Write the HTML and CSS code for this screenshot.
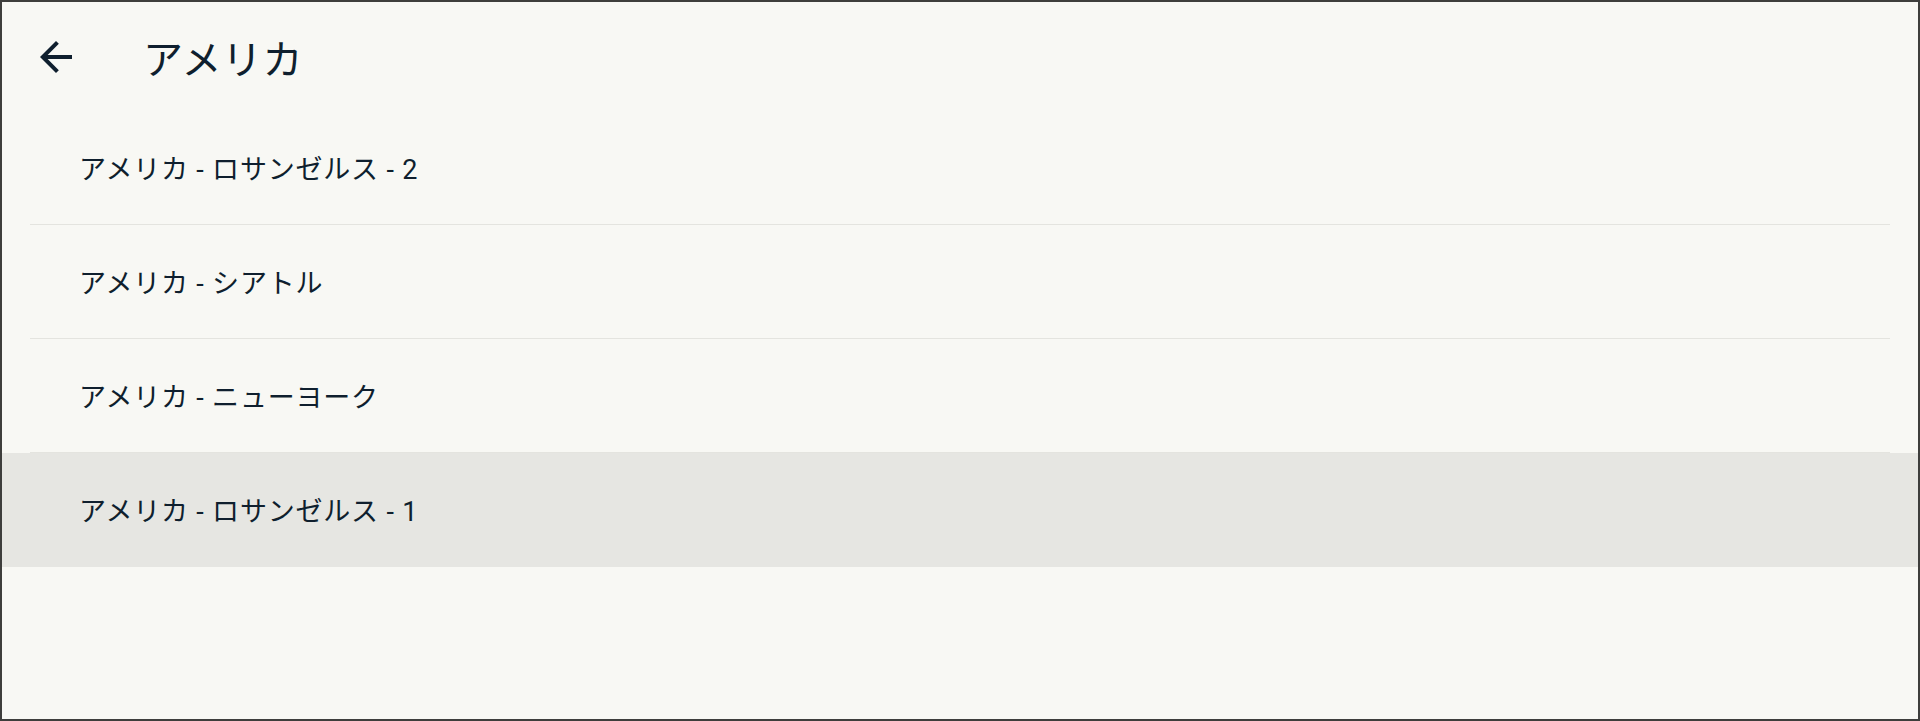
FILE: index.html
```html
<!DOCTYPE html>
<html lang="ja">
<head>
<meta charset="utf-8" />
<title>アメリカ</title>
<link rel="stylesheet" href="styles.css">
</head>
<body>
<div class="app">
	<div class="topbar">
		<a class="back" href="javascript:;">
			<svg viewBox="0 0 24 24" width="48" height="48"><path d="M20 11H7.83l5.59-5.59L12 4l-8 8 8 8 1.41-1.41L7.83 13H20v-2z" fill="#0f1f2e"/></svg>
		</a>
		<h1 class="title">アメリカ</h1>
	</div>
	<ul class="list">
		<li class="item"><div class="item-inner">アメリカ - ロサンゼルス - 2</div></li>
		<li class="item"><div class="item-inner">アメリカ - シアトル</div></li>
		<li class="item"><div class="item-inner">アメリカ - ニューヨーク</div></li>
		<li class="item selected"><div class="item-inner">アメリカ - ロサンゼルス - 1</div></li>
	</ul>
</div>
</body>
</html>
```

FILE: styles.css
```css
*{margin:0; padding:0; box-sizing:border-box;}
html,body{height:100%;}
body{background:#f8f8f4; font-family:Roboto, "Noto Sans CJK JP", sans-serif; color:#0f1f2e;}
.app{height:721px; border:2px solid #3e3e3c; background:#f8f8f4;}
.topbar{height:109px; display:flex; align-items:center; padding-left:30px;}
.back{display:flex; width:48px; height:48px;}
.title{margin-left:63px; font-size:40px; font-weight:400; letter-spacing:0.5px;}
.list{list-style:none;}
.item{display:block;}
.item-inner{margin:0 28px; height:114px; border-bottom:1px solid #e4e4df; padding-left:49px; display:flex; align-items:center; font-size:27px; letter-spacing:0.8px;}
.selected{background:#e6e6e2;}
.selected .item-inner{border-bottom-color:transparent;}
```
